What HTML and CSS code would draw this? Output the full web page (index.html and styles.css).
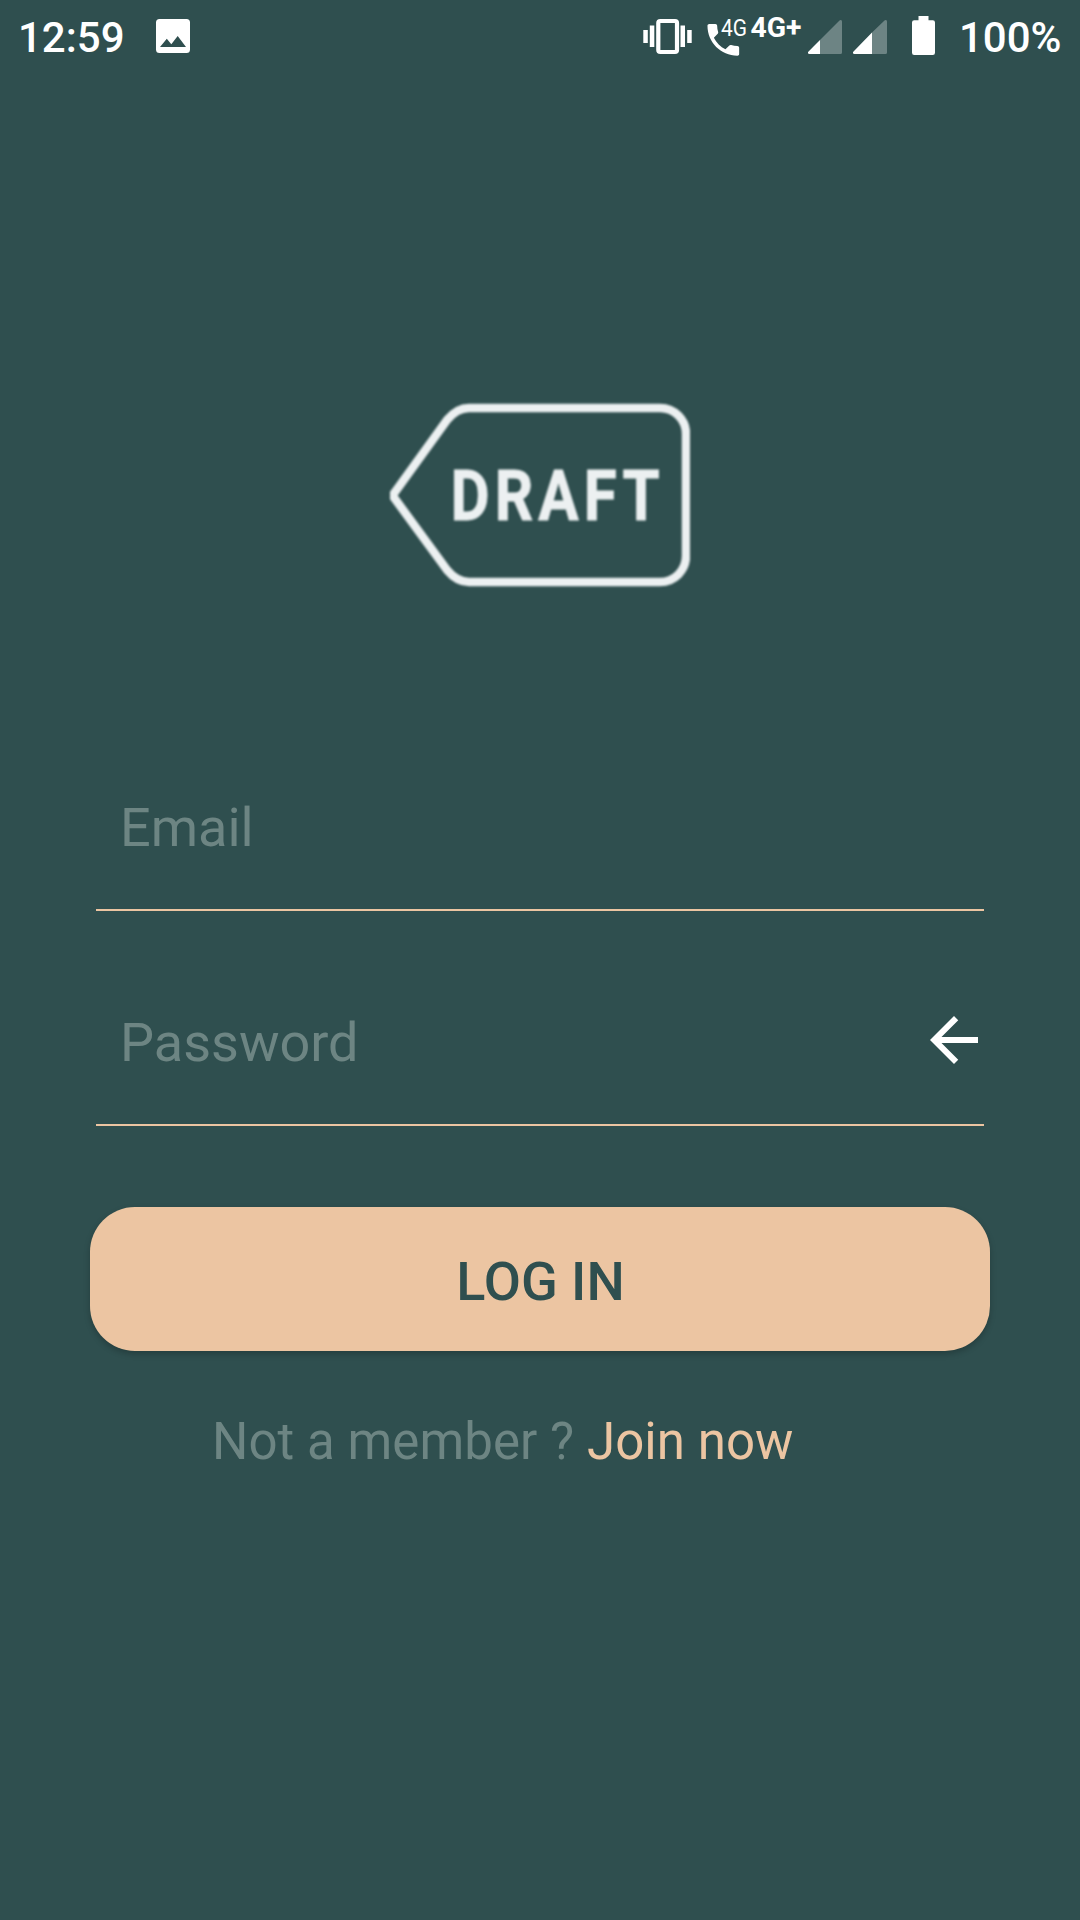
FILE: index.html
```html
<!DOCTYPE html>
<html lang="en">
<head>
<meta charset="utf-8">
<title>Draft – Log in</title>
<link rel="stylesheet" href="styles.css">
</head>
<body>
<header class="status-bar">
  <span class="clock">12:59</span>
  <svg class="icon-picture" width="36" height="60" viewBox="155 0 36 60"><path fill="#fff" fill-rule="evenodd" d="M159.500 19h27a3.500 3.500 0 0 1 3.500 3.500v27a3.500 3.500 0 0 1-3.500 3.500h-27a3.500 3.500 0 0 1-3.500-3.500v-27a3.500 3.500 0 0 1 3.500-3.500zM160 47h26l-8.300-11-6.400 8.300-4.500-5.500z"/></svg>
  <svg class="icon-vibrate" width="52" height="60" viewBox="642 0 52 60" fill="#fff"><path d="M643.300 30h4.500v13h-4.500zM649.800 25.500h4.500v21.500h-4.500zM680.500 25.500h4.500v21.500h-4.500zM687.200 30h4.500v13h-4.500z"/><rect x="658.300" y="21" width="18.700" height="31" rx="2" fill="none" stroke="#fff" stroke-width="4.200"/></svg>
  <svg class="icon-network" width="104" height="60" viewBox="700 0 104 60" fill="#fff"><path transform="translate(702.200 18.700) scale(1.760)" d="M6.620 10.790c1.440 2.830 3.760 5.140 6.590 6.590l2.200-2.200c.27-.27.67-.36 1.020-.24 1.120.37 2.330.57 3.570.57.55 0 1 .45 1 1V20c0 .55-.45 1-1 1-9.390 0-17-7.610-17-17 0-.55.45-1 1-1h3.500c.55 0 1 .45 1 1 0 1.250.2 2.450.57 3.570.11.35.03.74-.25 1.020z"/><text class="volte" x="721" y="36" textLength="26" lengthAdjust="spacingAndGlyphs">4G</text><text class="data" x="750.500" y="36.700" textLength="51" lengthAdjust="spacingAndGlyphs">4G+</text></svg>
  <svg class="icon-signal" width="34" height="60" viewBox="808 0 34 60"><path fill="#6d8484" d="M820 41.500V54h20.500a1.500 1.500 0 0 0 1.500-1.500V21.500c0-1.500-1.500-2-2.500-1L820 40z"/><path fill="#fff" d="M820 40L808.300 51.700c-1 1-.3 2.300 1 2.300H820z"/></svg>
  <svg class="icon-signal second" width="34" height="60" viewBox="853 0 34 60"><path fill="#6d8484" d="M872 33V54h13.500a1.500 1.500 0 0 0 1.500-1.500V21.500c0-1.500-1.500-2-2.500-1L872 32.500z"/><path fill="#fff" d="M872 32.500L853.300 51.700c-1 1-.3 2.300 1 2.300H872z"/></svg>
  <svg class="icon-battery" width="23" height="60" viewBox="912 0 23 60"><path fill="#fff" d="M918.500 16h10v4.300h4.300a2.200 2.200 0 0 1 2.200 2.200v30.300a2.200 2.200 0 0 1-2.200 2.200h-18.600a2.200 2.200 0 0 1-2.200-2.200v-30.300a2.200 2.200 0 0 1 2.200-2.200h4.300z"/></svg>
  <span class="level">100%</span>
</header>
<main class="login">
  <svg class="logo" width="300" height="190" viewBox="390 400 300 190" role="img" aria-label="Draft"><path fill="none" stroke="#ecf0f1" stroke-width="8.500" d="M392.500 495.500L447 420Q457 408 469 408H660A26 26 0 0 1 686 434V556A26 26 0 0 1 660 582H469Q457 582 447 570Z"/><text class="logo-text" y="519.700" transform="translate(450.500 0) scale(.86 1)"><tspan x="0">D</tspan><tspan x="51.500">R</tspan><tspan x="102">A</tspan><tspan x="155">F</tspan><tspan x="200">T</tspan></text></svg>
  <form class="form">
    <label class="field"><span class="hint">Email</span></label>
    <label class="field"><span class="hint">Password</span>
      <svg class="arrow" width="72" height="72" viewBox="0 0 24 24"><path fill="#fff" d="M20 11H7.830l5.590-5.590L12 4l-8 8 8 8 1.410-1.410L7.830 13H20z"/></svg>
    </label>
    <button class="submit" type="button">LOG IN</button>
  </form>
  <p class="signup"><span>Not a member ? </span><a class="join">Join now</a></p>
</main>
</body>
</html>
```
FILE: styles.css
```css
* { box-sizing: border-box; }
body {
  margin: 0;
  width: 1080px;
  height: 1920px;
  overflow: hidden;
  background: #2f4f4f;
  color: #fff;
  font-family: Roboto, sans-serif;
}
svg { display: block; flex: none; }
.status-bar {
  display: flex;
  height: 72px;
  padding-left: 18px;
}
.clock, .level {
  padding-top: 13px;
  font-size: 42px;
  line-height: 50px;
  font-weight: 500;
}
.clock { width: 137px; }
.icon-vibrate { margin-left: 451px; }
.icon-network { margin-left: 6px; }
.icon-signal { margin-left: 4px; }
.icon-signal.second { margin-left: 11px; }
.icon-battery { margin-left: 25px; }
.level { margin-left: 24px; }
.volte { font-size: 24px; }
.data { font-size: 28px; font-weight: 700; }
.login {
  display: flex;
  flex-direction: column;
  padding-top: 328px;
}
.logo { align-self: center; filter: blur(.8px); }
.logo-text {
  font-size: 70px;
  font-weight: 700;
  fill: #ecf0f1;
  stroke: #ecf0f1;
  stroke-width: .8px;
}
.form {
  display: flex;
  flex-direction: column;
  padding: 106px 90px 0;
}
.field {
  display: flex;
  justify-content: space-between;
  height: 215px;
  margin: 0 6px;
  padding: 100px 0 0 24px;
  border-bottom: 2px solid #ecc5a2;
}
.hint { font-size: 54px; line-height: 64px; color: #6d8583; }
.arrow { margin-top: -7px; margin-right: -6px; }
.submit {
  height: 144px;
  margin-top: 81px;
  padding: 5px 0 0 1px;
  border: 0;
  border-radius: 45px;
  background: #ecc5a2;
  box-shadow: 0 3px 6px rgba(0, 0, 0, .22);
  color: #2f4f4f;
  font: 500 54px Roboto, sans-serif;
}
.signup {
  margin: 61px 0 0 212px;
  font-size: 51px;
  line-height: 60px;
  letter-spacing: .06px;
  white-space: pre;
  color: #6d8583;
}
.join { color: #ecc5a2; }
```
